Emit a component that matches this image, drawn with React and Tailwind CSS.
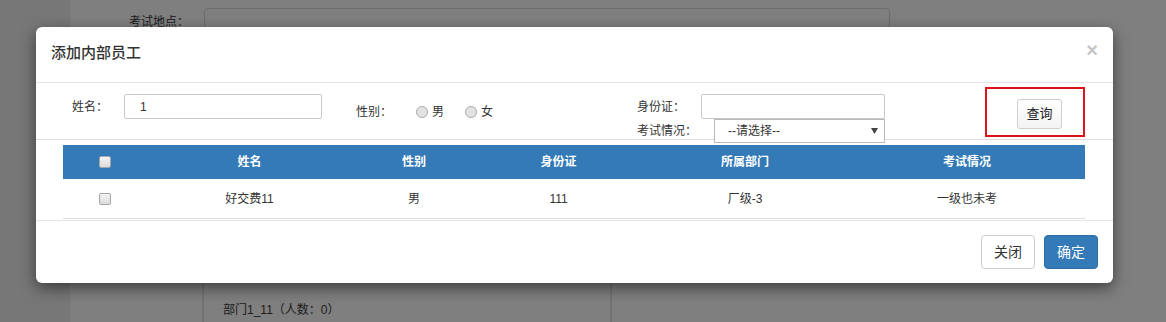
import React from 'react';

const columns = [
  { key: 'check', label: '' },
  { key: 'name', label: '姓名' },
  { key: 'sex', label: '性别' },
  { key: 'idcard', label: '身份证' },
  { key: 'dept', label: '所属部门' },
  { key: 'exam', label: '考试情况' },
];

const rows = [
  { name: '好交费11', sex: '男', idcard: '111', dept: '厂级-3', exam: '一级也未考' },
];

function CheckBox() {
  return (
    <span className="block w-[12px] h-[12px] rounded-[2px] border border-[#a6a6a6] bg-gradient-to-b from-[#f4f4f4] to-[#dcdcdc]" />
  );
}

function Radio({ label }) {
  return (
    <label className="flex items-center">
      <span className="w-[12px] h-[12px] rounded-full border border-[#acacac] bg-[#e2e2e2] mr-[4px]" />
      <span>{label}</span>
    </label>
  );
}

export default function App() {
  return (
    <div className="relative w-[1166px] h-[322px] overflow-hidden bg-[#7f7f7f] text-[12px] text-[#333] font-['Liberation_Sans','Noto_Sans_CJK_SC',sans-serif]">
      {/* page behind the backdrop */}
      <div className="flex h-full">
        <div className="w-[70px] bg-[#777777]" />
        <div className="flex-1 flex flex-col">
          <div className="flex items-start pt-[8px]">
            <span className="ml-[59px] mt-[5px] w-[75px] text-[#1b1b1b]">考试地点：</span>
            <div className="w-[686px] h-[28px] rounded-[4px] border border-[#6c6c6c]" />
          </div>
          <div className="mt-auto ml-[132px] w-[410px] h-[70px] border-x-2 border-[#737373] flex items-end">
            <span className="ml-[19px] mb-[3px] text-[#1b1b1b]">部门1_11（人数：0）</span>
          </div>
        </div>
      </div>

      {/* modal */}
      <div className="absolute left-[36px] top-[27px] w-[1077px] bg-white rounded-[6px] shadow-[0_5px_15px_rgba(0,0,0,0.5)]">
        <div className="h-[56px] border-b border-[#e5e5e5] flex items-start justify-between px-[15px]">
          <h4 className="mt-[17px] text-[15px] font-medium text-[#333] leading-[18px]">添加内部员工</h4>
          <button className="mt-[13px] text-[20px] font-bold leading-none text-[#c6c6c6]">×</button>
        </div>

        <div className="pb-[1px]">
          {/* search form */}
          <div className="h-[57px] border-b border-[#dddddd] flex items-start">
            <div className="flex items-center ml-[36px] mt-[11px]">
              <span className="w-[52px]">姓名：</span>
              <div className="w-[198px] h-[25px] border border-[#c8c8c8] rounded-[2px] flex items-center pl-[15px]">1</div>
            </div>

            <div className="flex items-center ml-[34px] mt-[20px] w-[281px]">
              <span className="w-[60px]">性别：</span>
              <Radio label="男" />
              <div className="w-[21px]" />
              <Radio label="女" />
            </div>

            <div className="flex flex-col mt-[11px] relative z-10">
              <div className="flex items-center">
                <span className="w-[64px]">身份证：</span>
                <div className="w-[184px] h-[25px] border border-[#c8c8c8] rounded-[2px] bg-white" />
              </div>
              <div className="flex items-center">
                <span className="w-[77px]">考试情况：</span>
                <div className="w-[171px] h-[24px] border border-[#b9b9b9] bg-white flex items-center justify-between pl-[13px] pr-[6px]">
                  <span>--请选择--</span>
                  <svg width="7" height="6" viewBox="0 0 7 6">
                    <path d="M0 0 H7 L3.5 6 Z" fill="#444" />
                  </svg>
                </div>
              </div>
            </div>

            <div className="ml-[100px] mt-[4px] w-[100px] h-[50px] border-2 border-[#d9141c] pl-[30px] pt-[10px]">
              <button className="w-[45px] h-[30px] border border-[#cfcfcf] rounded-[3px] bg-gradient-to-b from-white to-[#f3f3f3] text-[13px] text-[#222]">查询</button>
            </div>
          </div>

          {/* result table */}
          <div className="mt-[5px] ml-[27px] w-[1022px]">
            <div className="grid grid-cols-[84px_205px_124px_165px_208px_236px] h-[34px] bg-[#337ab7] text-white font-bold items-center">
              {columns.map((c) => (
                <div key={c.key} className="flex justify-center">
                  {c.key === 'check' ? <CheckBox /> : c.label}
                </div>
              ))}
            </div>
            {rows.map((r, i) => (
              <div key={i} className="grid grid-cols-[84px_205px_124px_165px_208px_236px] h-[40px] border-b border-[#dddddd] items-center">
                <div className="flex justify-center"><CheckBox /></div>
                <div className="text-center">{r.name}</div>
                <div className="text-center">{r.sex}</div>
                <div className="text-center">{r.idcard}</div>
                <div className="text-center">{r.dept}</div>
                <div className="text-center">{r.exam}</div>
              </div>
            ))}
          </div>
        </div>

        <div className="border-t border-[#e5e5e5] flex justify-end gap-[9px] pt-[14px] pb-[14px] pr-[15px]">
          <button className="w-[54px] h-[34px] rounded-[4px] border border-[#cccccc] bg-white text-[14px] text-[#333]">关闭</button>
          <button className="w-[54px] h-[34px] rounded-[4px] border border-[#2e6da4] bg-[#337ab7] text-[14px] text-white">确定</button>
        </div>
      </div>
    </div>
  );
}
